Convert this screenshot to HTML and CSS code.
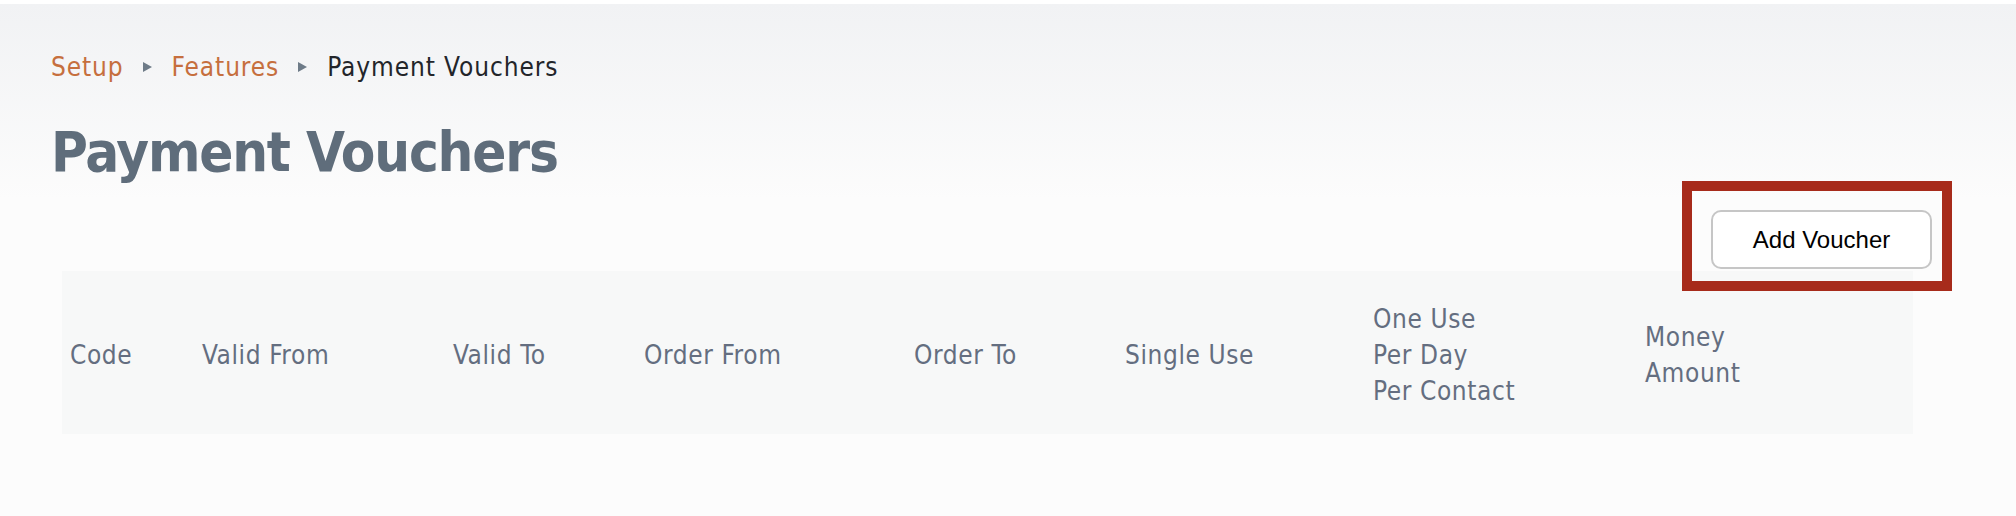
FILE: index.html
```html
<!DOCTYPE html>
<html lang="en">
<head>
  <meta charset="UTF-8">
  <meta name="viewport" content="width=device-width, initial-scale=1.0">
  <title>Payment Vouchers</title>
  <link rel="stylesheet" href="styles.css">
</head>
<body>

  <div class="page">
    <!-- Breadcrumb -->
    <nav class="breadcrumb">
      <a href="#">Setup</a>
      <span class="crumb-arrow"></span>
      <a href="#">Features</a>
      <span class="crumb-arrow"></span>
      <span class="crumb-current">Payment Vouchers</span>
    </nav>

    <h1 class="page-title">Payment Vouchers</h1>

    <!-- Toolbar -->
    <div class="toolbar">
      <div class="action">
        <button class="btn">Add Voucher</button>
        <span class="highlight"></span>
      </div>
    </div>

    <!-- Voucher list -->
    <table class="vouchers">
      <thead>
        <tr>
          <th class="col-code">Code</th>
          <th class="col-valid-from">Valid From</th>
          <th class="col-valid-to">Valid To</th>
          <th class="col-order-from">Order From</th>
          <th class="col-order-to">Order To</th>
          <th class="col-single">Single Use</th>
          <th class="col-per-day">One Use<br>Per Day<br>Per Contact</th>
          <th class="col-money">Money<br>Amount</th>
        </tr>
      </thead>
      <tbody></tbody>
    </table>
  </div>

</body>
</html>
```

FILE: styles.css
```css
body {
  margin: 0;
  padding: 0;
  font-family: 'DejaVu Sans Condensed', 'DejaVu Sans', sans-serif;
  background: #fcfcfc linear-gradient(to bottom, #ffffff 0, #ffffff 4px, #f1f2f4 4px, #fcfcfc 200px) no-repeat;
  min-height: 516px;
}

.page {
  padding: 49px 84px 0 51px;
}

/* Breadcrumb */
.breadcrumb {
  display: flex;
  align-items: center;
  font-size: 26px;
  line-height: 36px;
  letter-spacing: 0.9px;
}

.breadcrumb a {
  color: #c66f3e;
  text-decoration: none;
}

.crumb-arrow {
  width: 0;
  height: 0;
  border-top: 5px solid transparent;
  border-bottom: 5px solid transparent;
  border-left: 9px solid #6e7b88;
  margin: 0 20px 0 19px;
}

.crumb-current {
  color: #23252a;
}

.page-title {
  font-size: 56px;
  line-height: 64px;
  font-weight: bold;
  letter-spacing: -1.2px;
  color: #5f6d7b;
  margin: 35px 0 0;
}

/* Toolbar */
.toolbar {
  display: flex;
  justify-content: flex-end;
  margin-top: 26px;
}

.action {
  position: relative;
}

.btn {
  display: block;
  width: 221px;
  height: 59px;
  background: #fff;
  border: 2px solid #c6c6c6;
  border-radius: 10px;
  font-family: 'Liberation Sans', Arial, sans-serif;
  font-size: 24px;
  color: #000;
  cursor: pointer;
}

.highlight {
  position: absolute;
  left: -29px;
  top: -29px;
  right: -20px;
  bottom: -22px;
  border: 10px solid #a72b1b;
  pointer-events: none;
}

/* Table */
.vouchers {
  margin: 2px 0 0 11px;
  width: 1851px;
  border-collapse: collapse;
  table-layout: fixed;
  background: #f7f8f8;
}

.vouchers th {
  box-sizing: border-box;
  height: 163px;
  padding: 4px 0 0 8px;
  text-align: left;
  vertical-align: middle;
  font-weight: normal;
  font-size: 26px;
  line-height: 36px;
  letter-spacing: 0.6px;
  color: #646e80;
}

.col-code { width: 132px; }
.col-valid-from { width: 251px; }
.col-valid-to { width: 191px; }
.col-order-from { width: 270px; }
.col-order-to { width: 211px; }
.col-single { width: 248px; }
.col-per-day { width: 272px; }
.col-money { width: 276px; }
```
